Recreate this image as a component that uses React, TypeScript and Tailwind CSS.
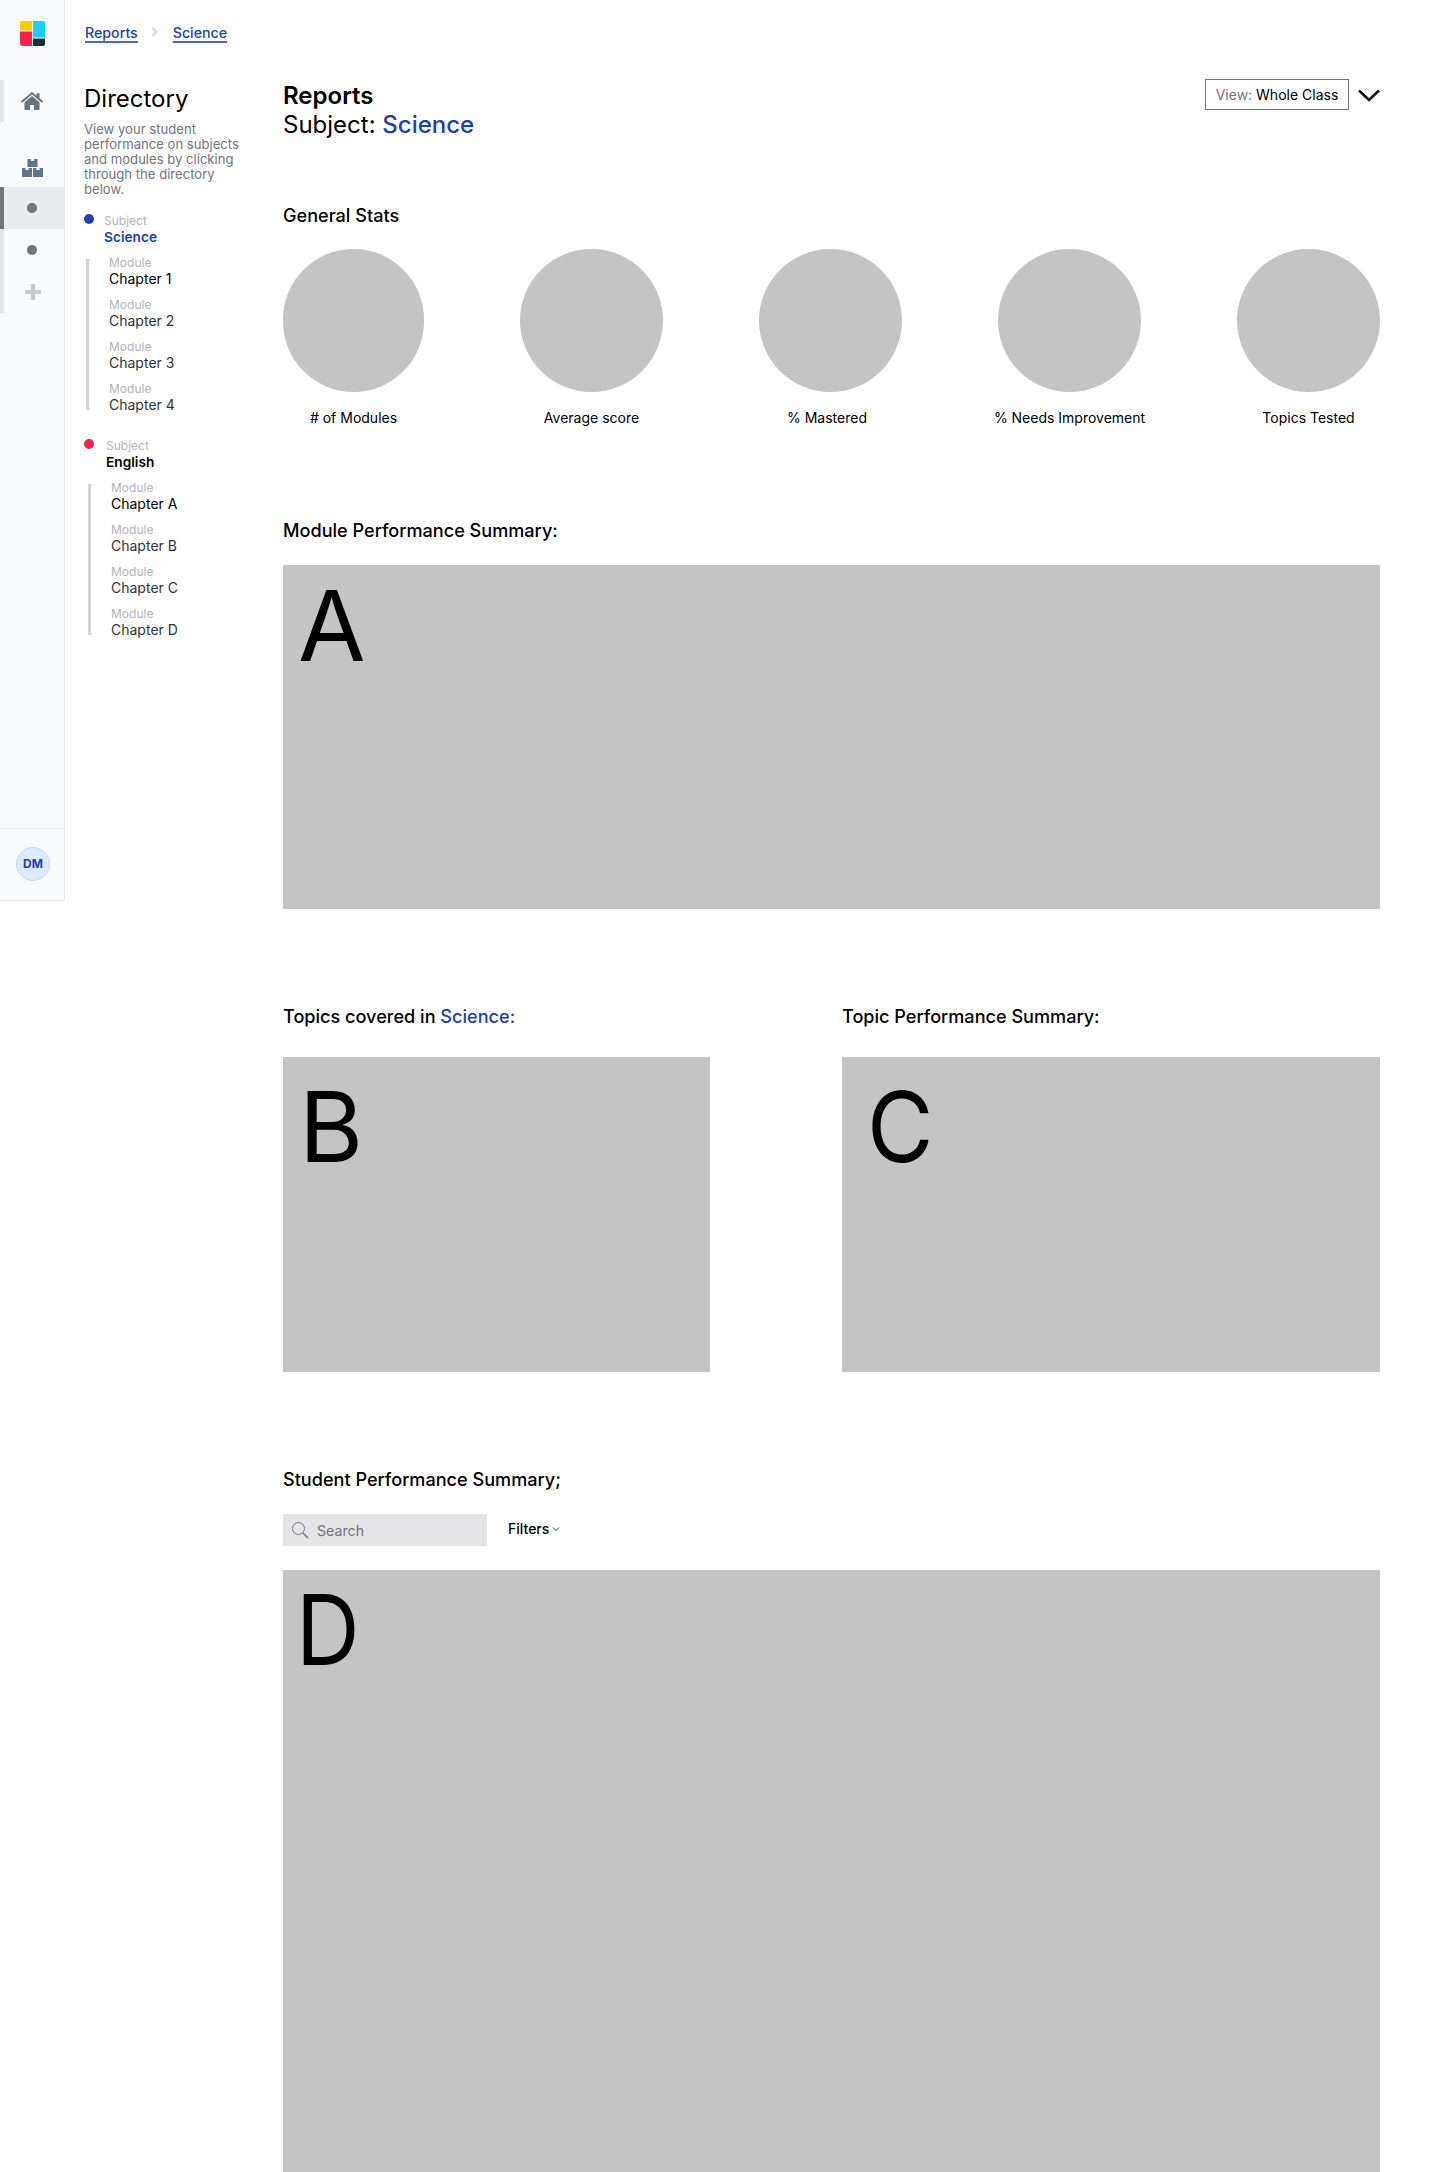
import React from "react";

const Logo = () => (
  <svg width="26" height="26" viewBox="0 0 26 26" className="block">
    <path d="M2 0h10v9.500H0V2a2 2 0 0 1 2-2z" fill="#ffcc00" />
    <path d="M0 10.500h12V25H3a3 3 0 0 1-3-3z" fill="#f7204f" />
    <path d="M13 0h10a2 2 0 0 1 2 2v14.500H13z" fill="#1ccdf7" />
    <path d="M13 17.500h12V23a2 2 0 0 1-2 2H13z" fill="#1f2a37" />
  </svg>
);

const HomeIcon = () => (
  <svg width="22" height="18" viewBox="0 0 22 18" className="block">
    <path d="M11 0 0 9.300l1.300 1.400L11 2.600l9.700 8.100L22 9.300l-3.500-3V1.200h-3v2.500z" fill="#6b7280" />
    <path d="M11 4 3.500 10.200V18H9v-5h4v5h5.500v-7.800z" fill="#6b7280" />
  </svg>
);

const BlocksIcon = () => (
  <svg width="21" height="18" viewBox="0 0 21 18" className="block">
    <path d="M5.500 0h3.400v2h3.200V0h3.400v8h-10z" fill="#64748b" />
    <path d="M0 9h3.400v2h3.200V9H10v9H0zM11 9h3.400v2h3.200V9H21v9H11z" fill="#64748b" />
  </svg>
);

const Module = ({ name, dark }: { name: string; dark?: boolean }) => (
  <div className="h-[42px]">
    <div className="text-[12px] leading-[16px] text-[#b4b4b8]">Module</div>
    <div className={`text-[14px] leading-[16px] ${dark ? "text-black" : "text-[#333338]"}`}>{name}</div>
  </div>
);

const Subject = ({
  dot,
  name,
  nameClass,
  indent,
  rowIndent,
  modules,
}: {
  dot: string;
  name: string;
  nameClass: string;
  indent: string;
  rowIndent: string;
  modules: string[];
}) => (
  <div>
    <div className="flex">
      <div className={`w-[10px] h-[10px] mt-[2px] rounded-full ${dot}`} />
      <div className={indent}>
        <div className="text-[12px] leading-[16px] mt-[1px] text-[#b4b4b8]">Subject</div>
        <div className={`text-[13.700px] leading-[17px] font-semibold ${nameClass}`}>{name}</div>
      </div>
    </div>
    <div className={`flex mt-[9px] ${rowIndent}`}>
      <div className="w-[4px] h-[151px] mt-[4px] border-l-[3px] border-t-2 border-b-2 border-[#d4d4d8]" />
      <div className="ml-[19px]">
        {modules.map((m, i) => (
          <Module key={m} name={m} dark={i === 0} />
        ))}
      </div>
    </div>
  </div>
);

const Stat = ({ label, offset, w }: { label: string; offset?: string; w?: string }) => (
  <div className={`${w ?? "w-[143px]"} flex flex-col items-center`}>
    <div className={`${w ?? "w-[143px]"} h-[143px] rounded-full bg-[#c4c4c4]`} />
    <div className={`mt-[16px] text-[14px] leading-[20px] whitespace-nowrap text-black ${offset ?? ""}`}>{label}</div>
  </div>
);

const Heading = ({ children }: { children: React.ReactNode }) => (
  <h2 className="text-[18.100px] leading-[24px] font-medium text-black">{children}</h2>
);

export default function App() {
  return (
    <div className="w-[1440px] h-[2172px] overflow-hidden bg-white flex items-start font-['Inter',sans-serif] text-black">
      {/* rail */}
      <aside className="w-[65px] h-[901px] shrink-0 flex flex-col bg-[#f8fafc] border-r border-b border-[#e2e8f0]">
        <div className="h-[80px] pt-[21px] pl-[20px]">
          <Logo />
        </div>
        <div className="h-[42px] border-l-4 border-[#e5e5e7] flex items-center justify-center pr-[4px]">
          <HomeIcon />
        </div>
        <div className="h-[65px] flex items-end justify-center pb-[10px] pl-[1px]">
          <BlocksIcon />
        </div>
        <div className="h-[42px] border-l-4 border-[#74747c] bg-[#e9ebef] flex items-center justify-center pr-[4px]">
          <div className="w-[10px] h-[10px] rounded-full bg-[#74747c]" />
        </div>
        <div className="h-[42px] border-l-4 border-[#e5e5e7] flex items-center justify-center pr-[4px]">
          <div className="w-[10px] h-[10px] rounded-full bg-[#74747c]" />
        </div>
        <div className="h-[42px] border-l-4 border-[#e5e5e7] flex items-center justify-center pr-[3px]">
          <div className="relative w-[16px] h-[16px]">
            <div className="absolute left-[6px] top-0 w-[4px] h-[16px] bg-[#c8c8cc]" />
            <div className="absolute left-0 top-[6px] w-[16px] h-[4px] bg-[#c8c8cc]" />
          </div>
        </div>
        <div className="mt-auto h-[72px] border-t border-[#e2e8f0] flex items-center justify-center pl-[2px] pb-[2px]">
          <div className="w-[34px] h-[34px] rounded-full bg-[#dbeafe] border border-[#bfdbfe] flex items-center justify-center text-[12px] font-bold text-[#1e40af]">
            DM
          </div>
        </div>
      </aside>

      {/* directory */}
      <div className="w-[218px] shrink-0 pl-[19px]">
        <nav className="h-[85px] pt-[24px] pl-[1px] flex items-start text-[14.200px] leading-[18px] font-medium text-[#1e40af]">
          <span className="underline underline-offset-[3px] decoration-[1.500px] decoration-[#4a67c4]">Reports</span>
          <svg width="8" height="10" viewBox="0 0 8 10" className="mx-[13.500px] mt-[3px]">
            <path d="M1.500 1l4 4-4 4" fill="none" stroke="#d4d4d8" strokeWidth="2" />
          </svg>
          <span className="underline underline-offset-[3px] decoration-[1.500px] decoration-[#4a67c4]">Science</span>
        </nav>
        <h1 className="text-[24px] leading-[28px] text-black">Directory</h1>
        <p className="mt-[9px] w-[164px] text-[13.100px] leading-[15px] text-[#74747c]">
          View your student performance on subjects and modules by clicking through the directory below.
        </p>
        <div className="mt-[15px]">
          <Subject
            dot="bg-[#1e40af]"
            name="Science"
            nameClass="text-[#1e40af]"
            indent="ml-[10px]"
            rowIndent="ml-[2px]"
            modules={["Chapter 1", "Chapter 2", "Chapter 3", "Chapter 4"]}
          />
        </div>
        <div className="mt-[14px]">
          <Subject
            dot="bg-[#f7204f]"
            name="English"
            nameClass="text-black"
            indent="ml-[12px]"
            rowIndent="ml-[4px]"
            modules={["Chapter A", "Chapter B", "Chapter C", "Chapter D"]}
          />
        </div>
      </div>

      {/* main */}
      <main className="w-[1097px] shrink-0 pt-[81px]">
        <div className="flex items-start justify-between h-[122px]">
          <div>
            <div className="text-[24px] leading-[29px] font-semibold text-black">Reports</div>
            <div className="text-[24px] leading-[29px] text-black">
              Subject: <span className="font-medium text-[#1e40af]">Science</span>
            </div>
          </div>
          <div className="flex items-center -mt-[2px]">
            <div className="h-[31px] w-[144px] border border-[#74747c] flex items-center justify-center text-[14px]">
              <span className="text-[#74747c]">View:&nbsp;</span>
              <span>Whole Class</span>
            </div>
            <svg width="22" height="13" viewBox="0 0 22 13" className="ml-[9px] mt-[2px]">
              <path d="M1 1.500l10 9.500 10-9.500" fill="none" stroke="#111" strokeWidth="2.500" />
            </svg>
          </div>
        </div>

        <Heading>General Stats</Heading>
        <div className="mt-[22px] flex justify-between">
          <Stat label="# of Modules" w="w-[141px]" />
          <Stat label="Average score" />
          <Stat label="% Mastered" offset="mr-[7px]" />
          <Stat label="% Needs Improvement" />
          <Stat label="Topics Tested" />
        </div>

        <div className="mt-[90px]">
          <Heading>Module Performance Summary:</Heading>
        </div>
        <div className="mt-[23px] h-[344px] bg-[#c4c4c4] pl-[15px] pt-[3px] text-[98px] leading-[116px]">A</div>

        <div className="mt-[95px] flex">
          <div className="w-[427px]">
            <Heading>
              Topics covered in <span className="text-[#1e40af]">Science:</span>
            </Heading>
            <div className="mt-[29px] h-[315px] bg-[#c4c4c4] pl-[16px] pt-[12px] text-[98px] leading-[116px]">B</div>
          </div>
          <div className="ml-[132px] w-[538px]">
            <Heading>Topic Performance Summary:</Heading>
            <div className="mt-[29px] h-[315px] bg-[#c4c4c4] pl-[25px] pt-[12px] text-[98px] leading-[116px]">
              <span className="inline-block origin-left scale-x-[0.93]">C</span>
            </div>
          </div>
        </div>

        <div className="mt-[95px]">
          <Heading>Student Performance Summary;</Heading>
        </div>
        <div className="mt-[23px] flex items-start">
          <div className="w-[204px] h-[32px] bg-[#e4e4e7] flex items-center pl-[8px] text-[14.200px] text-[#74747c]">
            <svg width="18" height="18" viewBox="0 0 18 18" className="shrink-0">
              <circle cx="7.500" cy="7.500" r="6" fill="none" stroke="#74747c" strokeWidth="1" />
              <path d="M12 12l5 5" stroke="#74747c" strokeWidth="1.500" />
            </svg>
            <span className="ml-[8px] mt-[2px]">Search</span>
          </div>
          <div className="ml-[21px] flex items-center h-[28px] text-[14px] font-medium">
            Filters
            <svg width="8" height="6" viewBox="0 0 8 6" className="ml-[3px] mt-[2px]">
              <path d="M1 1.500l3 3 3-3" fill="none" stroke="#111" strokeWidth="0.900" />
            </svg>
          </div>
        </div>
        <div className="mt-[24px] h-[700px] bg-[#c4c4c4] pl-[13px] pt-[2px] text-[98px] leading-[116px]">
          <span className="inline-block origin-left scale-x-[0.9]">D</span>
        </div>
      </main>
    </div>
  );
}
